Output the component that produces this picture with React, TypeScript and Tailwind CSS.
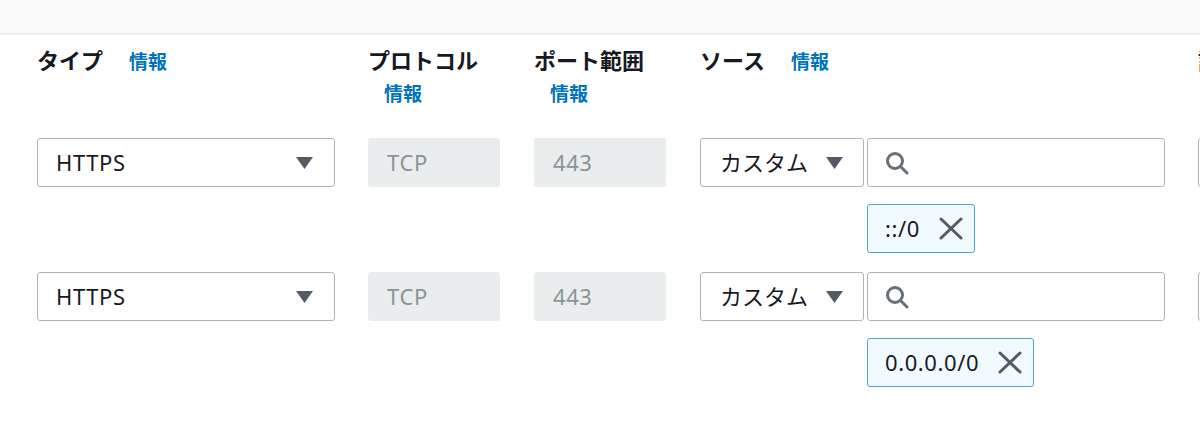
import React from 'react'

const font = { fontFamily: '"Noto Sans", "Noto Sans CJK JP", sans-serif' }

function Caret({ className = '' }: { className?: string }) {
  return (
    <svg className={className} width="17" height="12" viewBox="0 0 17 12">
      <polygon points="0,0 17,0 8.5,12" fill="#545b64" />
    </svg>
  )
}

function SearchIcon() {
  return (
    <svg width="24" height="24" viewBox="0 0 24 24" fill="none" stroke="#687078" strokeWidth="3" strokeLinecap="round">
      <circle cx="10" cy="10" r="7.5" />
      <line x1="15.5" y1="15.5" x2="22" y2="22" />
    </svg>
  )
}

function CloseIcon() {
  return (
    <svg width="24" height="23" viewBox="0 0 24 23" fill="none" stroke="#545b64" strokeWidth="3" strokeLinecap="round">
      <line x1="2" y1="2" x2="22" y2="21" />
      <line x1="22" y1="2" x2="2" y2="21" />
    </svg>
  )
}

function Info({ className = '' }: { className?: string }) {
  return <span className={`text-[19px] font-bold text-[#0073bb] ${className}`}>情報</span>
}

function Token({ value }: { value: string }) {
  return (
    <div className="ml-[167px] mt-[17px] inline-flex h-[49px] items-center gap-[19px] self-start rounded-[3px] border border-[#4aa6d6] bg-[#f1faff] pl-[17px] pr-[11px]">
      <span className="text-[22px] tracking-[0.6px] text-[#16191f]">{value}</span>
      <CloseIcon />
    </div>
  )
}

function RuleRow({ cidr, first }: { cidr: string; first?: boolean }) {
  return (
    <div className={`flex ${first ? 'mt-[31px]' : 'mt-[19px]'}`}>
      <div className="w-[331px] shrink-0">
        <div className="flex h-[49px] w-[298px] items-center justify-between rounded-[3px] border border-[#aab7b8] bg-white pl-[18px] pr-[21px]">
          <span className="text-[22px] tracking-[0.6px] text-[#16191f]">HTTPS</span>
          <Caret />
        </div>
      </div>
      <div className="w-[166px] shrink-0">
        <div className="flex h-[49px] w-[132px] items-center rounded-[3px] bg-[#eaeded] pl-[19px] text-[22px] tracking-[0.6px] text-[#879596]">TCP</div>
      </div>
      <div className="w-[166px] shrink-0">
        <div className="flex h-[49px] w-[132px] items-center rounded-[3px] bg-[#eaeded] pl-[19px] text-[22px] tracking-[0.6px] text-[#879596]">443</div>
      </div>
      <div className="flex w-[498px] shrink-0 flex-col">
        <div className="flex gap-[3px]">
          <div className="flex h-[49px] w-[164px] items-center justify-between rounded-[3px] border border-[#aab7b8] bg-white pl-[19px] pr-[20px]">
            <span className="text-[22px] text-[#16191f]">カスタム</span>
            <Caret />
          </div>
          <div className="flex h-[49px] w-[298px] items-center rounded-[3px] border border-[#aab7b8] bg-white pl-[17px]">
            <SearchIcon />
          </div>
        </div>
        <Token value={cidr} />
      </div>
      <div className="shrink-0">
        <div className="h-[49px] w-[200px] rounded-[3px] border border-[#aab7b8] bg-white" />
      </div>
    </div>
  )
}

export default function App() {
  return (
    <div className="h-[428px] w-[1200px] overflow-hidden bg-white" style={font}>
      <div className="h-[35px] border-b-2 border-[#eaeded] bg-[#fafafa]" />
      <div className="flex flex-col pl-[37px] pt-[10px]">
        <div className="flex text-[#16191f]">
          <div className="w-[331px] shrink-0 leading-[30px]">
            <span className="text-[22px] font-bold">タイプ</span>
            <Info className="ml-[26px]" />
          </div>
          <div className="flex w-[166px] shrink-0 flex-col">
            <span className="text-[22px] font-bold leading-[30px]">プロトコル</span>
            <Info className="mt-[6px] pl-[16px] leading-[26px]" />
          </div>
          <div className="flex w-[166px] shrink-0 flex-col">
            <span className="text-[22px] font-bold leading-[30px]">ポート範囲</span>
            <Info className="mt-[6px] pl-[16px] leading-[26px]" />
          </div>
          <div className="w-[498px] shrink-0 leading-[30px]">
            <span className="text-[22px] font-bold">ソース</span>
            <Info className="ml-[26px]" />
          </div>
          <div className="shrink-0 whitespace-nowrap leading-[30px]">
            <span className="text-[22px] font-bold">説明 - オプション</span>
          </div>
        </div>
        <RuleRow cidr="::/0" first />
        <RuleRow cidr="0.0.0.0/0" />
      </div>
    </div>
  )
}
